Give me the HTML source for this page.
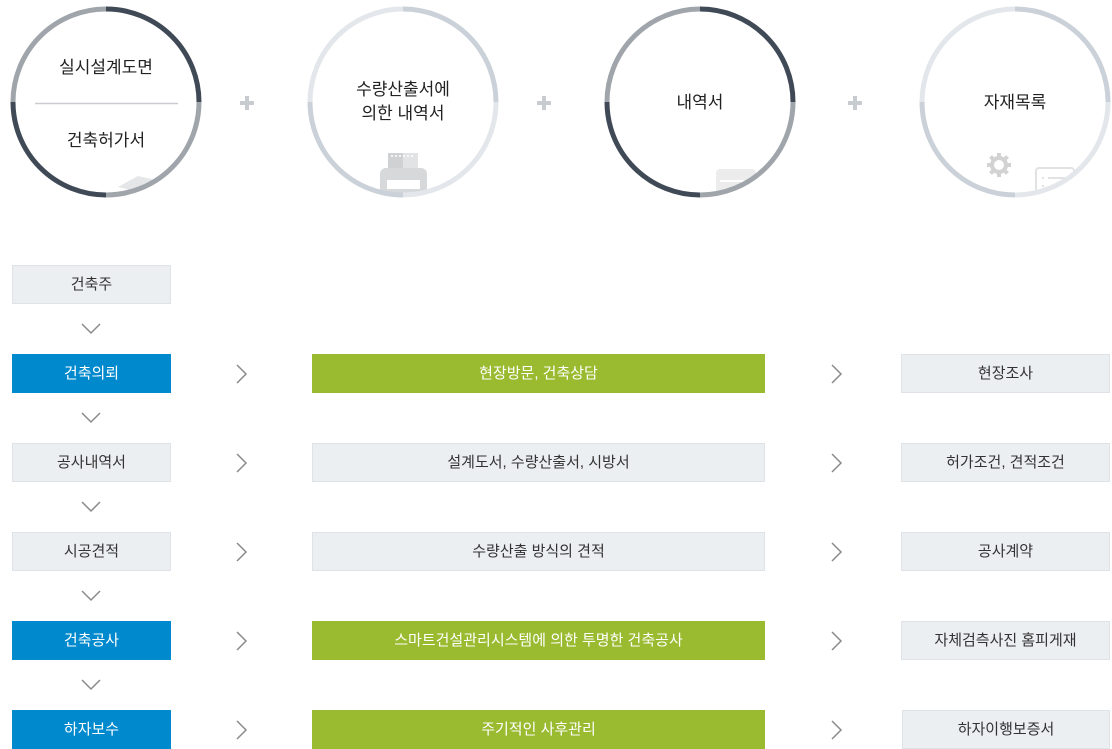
<!DOCTYPE html>
<html><head><meta charset="utf-8">
<style>
html,body{margin:0;padding:0;background:#fff;width:1112px;height:749px;overflow:hidden;position:relative;font-family:"Liberation Sans","Noto Sans CJK KR",sans-serif;color:#333}
.b{position:absolute;height:39px;line-height:39px;text-align:center;font-size:15px;box-sizing:border-box}
.g{background:#eceff2;border:1px solid #dfe3e7;line-height:37px;color:#333}
.bl{background:#0089cd;color:#fff}
.gr{background:#9aba2f;color:#fff}
.t{position:absolute;font-size:17px;color:#222;text-align:center;line-height:24px}
svg{position:absolute;left:0;top:0}
</style></head><body>
<svg width="1112" height="749" viewBox="0 0 1112 749">
<defs>
<clipPath id="c1"><circle cx="106" cy="102" r="93"/></clipPath>
<clipPath id="c2"><circle cx="403" cy="102" r="93"/></clipPath>
<clipPath id="c3"><circle cx="700" cy="102" r="93"/></clipPath>
<clipPath id="c4"><circle cx="1015" cy="102" r="93"/></clipPath>
</defs>
<path clip-path="url(#c1)" d="M118 187 L138 176 L160 181 L150 195 Z" fill="#e4e6e8"/>
<g clip-path="url(#c2)"><g fill="#d6d8da"><rect x="388" y="153" width="30" height="22" fill="#cfd1d3"/><rect x="403" y="153" width="15" height="22" fill="#e2e3e4"/><rect x="380" y="168" width="47" height="30" rx="6"/><rect x="387" y="180" width="33" height="9" fill="#fff"/></g>
<g fill="#fff"><circle cx="392" cy="156" r="1"/><circle cx="396" cy="156" r="1"/><circle cx="400" cy="156" r="1"/><circle cx="404" cy="156" r="1"/><circle cx="408" cy="156" r="1"/><circle cx="412" cy="156" r="1"/></g></g>
<g clip-path="url(#c3)"><rect x="716" y="169" width="40" height="34" rx="4" fill="#ececec"/><rect x="720" y="180" width="32" height="2" fill="#fff"/></g>
<g transform="translate(999,165)" fill="#d2d2d2"><circle r="9"/><g stroke="#d2d2d2" stroke-width="4"><line x1="0" y1="-12" x2="0" y2="12"/><line x1="-12" y1="0" x2="12" y2="0"/><line x1="-8.5" y1="-8.5" x2="8.5" y2="8.5"/><line x1="-8.5" y1="8.5" x2="8.5" y2="-8.5"/></g><circle r="5" fill="#fff"/></g>
<g clip-path="url(#c4)"><rect x="1036" y="168" width="38" height="34" rx="3" fill="none" stroke="#e2e2e2" stroke-width="2"/><g fill="#e2e2e2"><rect x="1042" y="177" width="2" height="2"/><rect x="1042" y="185" width="2" height="2"/><rect x="1048" y="177" width="20" height="2"/></g></g>
<g fill="none" stroke-width="5">
<g transform="translate(106,102)"><path d="M-93 0 A93 93 0 0 1 0 -93" stroke="#a0a5ab"/><path d="M0 -93 A93 93 0 0 1 93 0" stroke="#404a57"/><path d="M93 0 A93 93 0 0 1 0 93" stroke="#a0a5ab"/><path d="M0 93 A93 93 0 0 1 -93 0" stroke="#404a57"/></g>
<g transform="translate(403,102)"><path d="M-93 0 A93 93 0 0 1 0 -93" stroke="#e3e6ea"/><path d="M0 -93 A93 93 0 0 1 93 0" stroke="#cbd1d8"/><path d="M93 0 A93 93 0 0 1 0 93" stroke="#e3e6ea"/><path d="M0 93 A93 93 0 0 1 -93 0" stroke="#cbd1d8"/></g>
<g transform="translate(700,102)"><path d="M-93 0 A93 93 0 0 1 0 -93" stroke="#a0a5ab"/><path d="M0 -93 A93 93 0 0 1 93 0" stroke="#404a57"/><path d="M93 0 A93 93 0 0 1 0 93" stroke="#a0a5ab"/><path d="M0 93 A93 93 0 0 1 -93 0" stroke="#404a57"/></g>
<g transform="translate(1015,102)"><path d="M-93 0 A93 93 0 0 1 0 -93" stroke="#e3e6ea"/><path d="M0 -93 A93 93 0 0 1 93 0" stroke="#cbd1d8"/><path d="M93 0 A93 93 0 0 1 0 93" stroke="#e3e6ea"/><path d="M0 93 A93 93 0 0 1 -93 0" stroke="#cbd1d8"/></g>
</g>
<line x1="35" y1="103.5" x2="178" y2="103.5" stroke="#c9ccd0" stroke-width="1.5"/>
<g stroke="#c8cbcf" stroke-width="4"><path d="M240 103h14M247 96v14"/><path d="M537 103h14M544 96v14"/><path d="M848 103h14M855 96v14"/></g>
<g fill="none" stroke="#8a8a8a" stroke-width="1.5">
<path d="M82 324l9 9 9-9"/><path d="M82 413l9 9 9-9"/><path d="M82 502l9 9 9-9"/><path d="M82 591l9 9 9-9"/><path d="M82 680l9 9 9-9"/>
<path d="M237 365l9 9-9 9"/><path d="M237 454l9 9-9 9"/><path d="M237 543l9 9-9 9"/><path d="M237 632l9 9-9 9"/><path d="M237 721l9 9-9 9"/>
<path d="M832 365l9 9-9 9"/><path d="M832 454l9 9-9 9"/><path d="M832 543l9 9-9 9"/><path d="M832 632l9 9-9 9"/><path d="M832 721l9 9-9 9"/>
</g>
</svg>
<div class="t" style="left:26px;top:56px;width:160px">실시설계도면</div>
<div class="t" style="left:26px;top:129px;width:160px">건축허가서</div>
<div class="t" style="left:323px;top:78px;width:160px">수량산출서에<br>의한 내역서</div>
<div class="t" style="left:620px;top:91px;width:160px">내역서</div>
<div class="t" style="left:935px;top:91px;width:160px">자재목록</div>

<div class="b g" style="left:12px;top:265px;width:159px">건축주</div>
<div class="b bl" style="left:12px;top:354px;width:159px">건축의뢰</div>
<div class="b gr" style="left:312px;top:354px;width:453px">현장방문, 건축상담</div>
<div class="b g" style="left:901px;top:354px;width:209px">현장조사</div>
<div class="b g" style="left:12px;top:443px;width:159px">공사내역서</div>
<div class="b g" style="left:312px;top:443px;width:453px">설계도서, 수량산출서, 시방서</div>
<div class="b g" style="left:901px;top:443px;width:209px">허가조건, 견적조건</div>
<div class="b g" style="left:12px;top:532px;width:159px">시공견적</div>
<div class="b g" style="left:312px;top:532px;width:453px">수량산출 방식의 견적</div>
<div class="b g" style="left:901px;top:532px;width:209px">공사계약</div>
<div class="b bl" style="left:12px;top:621px;width:159px">건축공사</div>
<div class="b gr" style="left:312px;top:621px;width:453px">스마트건설관리시스템에 의한 투명한 건축공사</div>
<div class="b g" style="left:901px;top:621px;width:209px">자체검측사진 홈피게재</div>
<div class="b bl" style="left:12px;top:710px;width:159px">하자보수</div>
<div class="b gr" style="left:312px;top:710px;width:453px">주기적인 사후관리</div>
<div class="b g" style="left:902px;top:710px;width:208px">하자이행보증서</div>
</body></html>
